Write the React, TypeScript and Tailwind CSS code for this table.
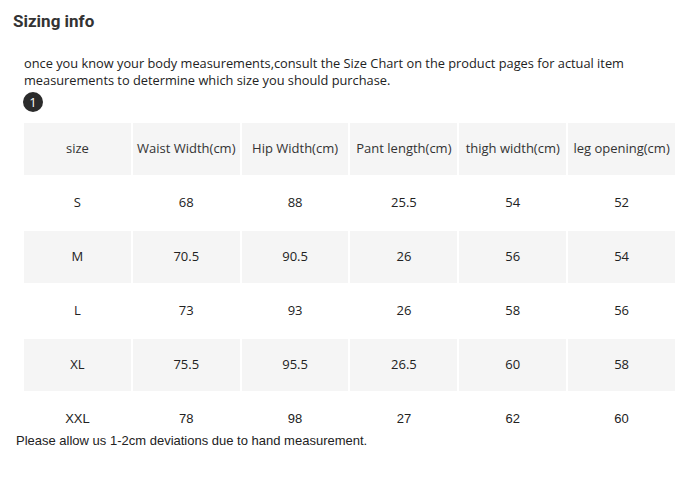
const HEADERS = ['size', 'Waist Width(cm)', 'Hip Width(cm)', 'Pant length(cm)', 'thigh width(cm)', 'leg opening(cm)']

const ROWS = [
  ['S', '68', '88', '25.5', '54', '52'],
  ['M', '70.5', '90.5', '26', '56', '54'],
  ['L', '73', '93', '26', '58', '56'],
  ['XL', '75.5', '95.5', '26.5', '60', '58'],
  ['XXL', '78', '98', '27', '62', '60'],
]

export default function App() {
  return (
    <div className="min-h-[486px] w-[685px] bg-white text-[#333]">
      <h1 className="ml-[13px] pt-[11px] font-['Roboto',sans-serif] text-[17px] font-bold leading-[20px] text-[#333]">
        Sizing info
      </h1>

      <p className="ml-[24px] mt-[24px] w-[625px] font-['Open_Sans',sans-serif] text-[12.8px] leading-[17px] text-[#222]">
        once you know your body measurements,consult the Size Chart on the product pages for actual item measurements to determine which size you should purchase.
      </p>

      <div className="ml-[23px] mt-[3px] flex h-[20px] w-[20px] items-center justify-center rounded-full bg-[#2b2b2b] font-['Open_Sans',sans-serif] text-[13px] leading-none text-white">
        1
      </div>

      {/* size chart */}
      <table className="ml-[22px] mt-[9px] w-[655px] table-fixed border-separate border-spacing-[2px] font-['Open_Sans',sans-serif] text-[13px] text-[#333]">
        <thead>
          <tr>
            {HEADERS.map((h) => (
              <th key={h} className="h-[52px] bg-[#f5f5f5] p-0 text-center font-normal whitespace-nowrap">
                {h}
              </th>
            ))}
          </tr>
        </thead>
        <tbody>
          {ROWS.map((row, i) => {
            const last = i === ROWS.length - 1
            return (
              <tr key={row[0]}>
                {row.map((v, j) => (
                  <td
                    key={j}
                    className={`h-[52px] p-0 text-center text-[#222] ${i % 2 === 1 ? 'bg-[#f5f5f5]' : 'bg-white'} ${last ? "font-['Liberation_Sans',Arial,sans-serif]" : ''}`}
                  >
                    {v}
                  </td>
                ))}
              </tr>
            )
          })}
        </tbody>
      </table>

      <p className="relative ml-[16px] mt-[-14px] font-['Liberation_Sans',Arial,sans-serif] text-[13px] leading-[16px] text-[#222]">
        Please allow us 1-2cm deviations due to hand measurement.
      </p>
    </div>
  )
}
